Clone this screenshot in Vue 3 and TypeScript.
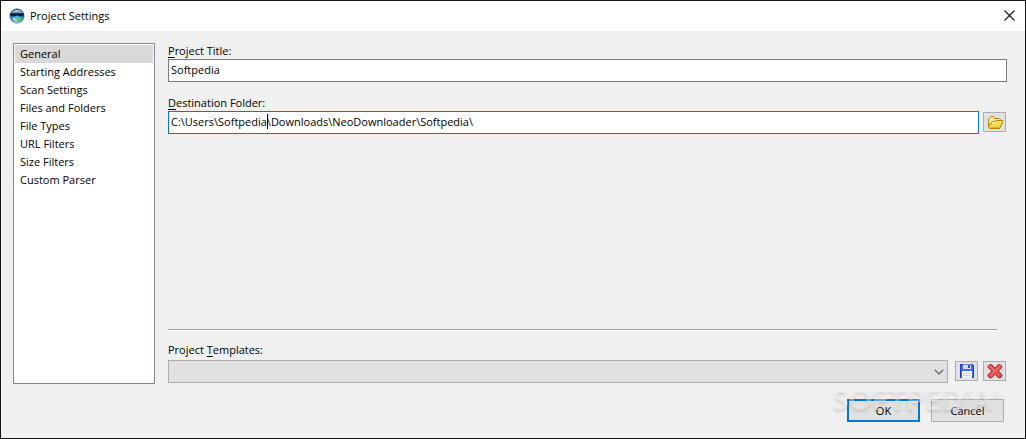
<script setup lang="ts">
import { nextTick, onMounted, ref } from 'vue'

const sections: string[] = [
  'General',
  'Starting Addresses',
  'Scan Settings',
  'Files and Folders',
  'File Types',
  'URL Filters',
  'Size Filters',
  'Custom Parser',
]

const active = ref('General')
const title = ref('Softpedia')
const folder = ref('C:\\Users\\Softpedia\\Downloads\\NeoDownloader\\Softpedia\\')
const template = ref('')
const folderInput = ref<HTMLInputElement | null>(null)
const caretIndex = 'C:\\Users\\Softpedia'.length
const caretLeft = ref(0)

onMounted(async () => {
  await nextTick()
  const input = folderInput.value
  const context = document.createElement('canvas').getContext('2d')
  if (!input || !context) return
  const style = getComputedStyle(input)
  context.font = `${style.fontSize} ${style.fontFamily}`
  const inset = parseFloat(style.paddingLeft) + parseFloat(style.borderLeftWidth)
  caretLeft.value = Math.round(inset + context.measureText(folder.value.slice(0, caretIndex)).width)
})
</script>

<template>
  <main class="window">
    <header class="titlebar">
      <svg class="app-icon" viewBox="0 0 16 16" aria-hidden="true">
        <defs>
          <radialGradient id="globe" cx="50%" cy="80%" r="75%">
            <stop offset="0" stop-color="#a5f0e0" />
            <stop offset="0.4" stop-color="#3fa0d8" />
            <stop offset="1" stop-color="#123a78" />
          </radialGradient>
          <linearGradient id="shine" x1="0" y1="0" x2="0" y2="1">
            <stop offset="0" stop-color="#d8e8f4" />
            <stop offset="1" stop-color="#3a6f9c" />
          </linearGradient>
        </defs>
        <circle cx="8" cy="8" r="7.2" fill="url(#globe)" stroke="#6d8090" stroke-width="0.6" />
        <path d="M2 5.6C3.4 .9 12.6 .9 14 5.6Z" fill="url(#shine)" />
        <path d="M.8 5.6Q8 5 15.2 5.6L14.6 7.6Q12.5 9 9.8 8L8 7.4 6.3 8Q3.5 9 1.4 7.6Z" fill="#0b1d38" />
        <path d="M8.4 9l3 .5 1.2 1.3-1.5 2.2-2.8.8-1-2Z" fill="#63c06a" />
        <path d="M3.4 9.8l3 .4-.6 2-1.5-.4Z" fill="#a8ecf4" />
      </svg>
      <h1>Project Settings</h1>
      <button class="close" type="button" aria-label="Close">
        <svg viewBox="0 0 11 11" aria-hidden="true">
          <path d="M.5.5l10 10M10.5.5l-10 10" fill="none" stroke="#111" stroke-width="1.1" />
        </svg>
      </button>
    </header>

    <div class="body">
      <nav class="sections" aria-label="Settings sections">
        <button
          v-for="name in sections"
          :key="name"
          type="button"
          :class="{ selected: name === active }"
          @click="active = name"
        >{{ name }}</button>
      </nav>

      <section class="form">
        <div class="field">
          <label for="title"><u>P</u>roject Title:</label>
          <input id="title" v-model="title" type="text" spellcheck="false" />
        </div>

        <div class="field">
          <label for="folder"><u>D</u>estination Folder:</label>
          <div class="row">
            <div class="caret-box">
              <input id="folder" ref="folderInput" v-model="folder" class="focused" type="text" spellcheck="false" />
              <span class="caret" :style="{ left: caretLeft + 'px' }"></span>
            </div>
            <button class="tool" type="button" aria-label="Browse">
              <svg viewBox="0 0 16 16" aria-hidden="true">
                <path d="M1.5 12.5V4.5L2.5 3.5H3L4 2.5H6.5L7.5 3.5V4.5H12.5L13.5 5.5V7" fill="#fbe88a" stroke="#b8860b" />
                <path d="M1.5 12.5L4.5 8.5L5.5 7.5H8L9 6.5H15.5V8L13.5 13L12.5 14.5H3L1.5 13.5Z" fill="#f8da58" stroke="#b07c08" />
                <path d="M5 9L6 8.5H8.5L9.5 7.5H14.5" fill="none" stroke="#fff6b8" />
                <path d="M3.5 13.5H12L13 12" fill="none" stroke="#e1ad1c" />
              </svg>
            </button>
          </div>
        </div>

        <hr />

        <div class="field">
          <label class="template-label" for="template">Project <u>T</u>emplates:</label>
          <div class="row templates">
            <div class="select-box">
              <select id="template" v-model="template">
                <option value=""></option>
              </select>
              <svg class="chevron" viewBox="0 0 10 6" aria-hidden="true">
                <path d="M.8.8L5 5 9.2.8" fill="none" stroke="#555" stroke-width="1.2" />
              </svg>
            </div>
            <button class="tool" type="button" aria-label="Save template">
              <svg viewBox="0 0 16 16" aria-hidden="true">
                <path d="M1.5 1.5H13.5L14.5 2.5V14.5H1.5Z" fill="#3d6bff" stroke="#1a35cc" />
                <path d="M4 1H12V6H4Z" fill="#cddcf2" />
                <path d="M4 1H12V2H4Z" fill="#7792ca" />
                <path d="M9 2H11V5H9Z" fill="#2446c8" />
                <path d="M3 8H13V15H3Z" fill="#f6f9ff" />
                <path d="M4 10H12V11H4ZM4 12H12V13H4Z" fill="#c3d0e6" />
              </svg>
            </button>
            <button class="tool" type="button" aria-label="Delete template">
              <svg viewBox="0 0 16 16" aria-hidden="true">
                <path d="M1 3.5L3 1.5H4.5L8 5.2 11.5 1.5H12.5L15 3.5V4.5L11.2 8 15 12V13L13 15H11.8L8 11.2 4.2 15H3L1 13V11.8L4.8 8 1 4.5Z" fill="#e9504f" stroke="#b81f24" />
                <path d="M3 3.5L7.6 7.8M12.7 3.5L8.4 7.8 4 12" fill="none" stroke="#f89590" />
              </svg>
            </button>
          </div>
        </div>
      </section>
    </div>

    <footer class="actions">
      <button class="push primary" type="button">OK</button>
      <button class="push" type="button">Cancel</button>
      <div class="watermark" aria-hidden="true">SOFTPEDIA<sup>®</sup></div>
    </footer>
  </main>
</template>

<style>
body {
  margin: 0;
}
</style>

<style scoped>
* {
  box-sizing: border-box;
}

.window {
  display: flex;
  flex-direction: column;
  min-height: 100vh;
  border: 1px solid #151515;
  background: #f0f0f0;
  color: #000;
  font: 11px/18px "Open Sans", "Noto Sans", sans-serif;
}

button,
input,
select {
  margin: 0;
  color: inherit;
  font: inherit;
  border-radius: 0;
  outline: none;
}

.titlebar {
  display: flex;
  align-items: center;
  height: 30px;
  padding: 0 10px 0 8px;
  background: #fff;
}

.app-icon {
  width: 16px;
  height: 16px;
}

h1 {
  flex: 1;
  margin: 0 0 0 5px;
  font-size: 11px;
  font-weight: 400;
}

.close {
  display: flex;
  padding: 0 0 2px;
  border: 0;
  background: none;
}

.close svg {
  width: 11px;
  height: 11px;
}

.body {
  display: flex;
  flex: 1;
  gap: 13px;
  padding: 12px 18px 0 12px;
}

.sections {
  display: flex;
  flex: 0 0 142px;
  flex-direction: column;
  padding: 1px;
  border: 1px solid #828790;
  background: #fff;
}

.sections button {
  height: 18px;
  padding: 0 5px;
  border: 0;
  background: none;
  text-align: left;
}

.sections .selected {
  background: #d9d9d9;
}

.form {
  display: flex;
  flex: 1;
  flex-direction: column;
  min-width: 0;
  padding-bottom: 1px;
}

.field {
  display: flex;
  flex-direction: column;
}

.field + .field {
  margin-top: 13px;
}

label {
  height: 16px;
  line-height: 16px;
}

.template-label {
  height: 18px;
}

u {
  text-underline-offset: 2px;
}

input {
  width: 100%;
  height: 23px;
  padding: 0 2px 2px;
  border: 1px solid #7a7a7a;
  background: #fff;
}

input.focused {
  border-color: #0078d7;
}

.row {
  display: flex;
  align-items: flex-start;
  gap: 4px;
  padding-right: 1px;
}

.caret-box,
.select-box {
  position: relative;
  display: flex;
  flex: 1;
}

.caret {
  position: absolute;
  top: 3px;
  width: 1px;
  height: 15px;
  background: #000;
}

.tool {
  display: flex;
  align-items: center;
  justify-content: center;
  width: 23px;
  height: 20px;
  margin-top: 1px;
  padding: 0;
  border: 1px solid #adadad;
  background: #e1e1e1;
}

.tool svg {
  width: 16px;
  height: 16px;
}

hr {
  width: auto;
  height: 2px;
  margin: auto 10px 11px 0;
  border: 0;
  border-top: 1px solid #a0a0a0;
  background: #fff;
}

.templates {
  gap: 5px;
}

.select-box {
  margin-right: 2px;
}

.caret-box {
  margin-right: 0;
}

select {
  width: 100%;
  height: 23px;
  border: 1px solid #adadad;
  background: #e1e1e1;
  appearance: none;
}

.chevron {
  position: absolute;
  top: 9px;
  right: 4px;
  width: 10px;
  height: 6px;
  pointer-events: none;
}

.actions {
  position: relative;
  display: flex;
  justify-content: flex-end;
  gap: 11px;
  padding: 15px 21px 16px;
}

.push {
  width: 73px;
  height: 23px;
  padding: 0;
  border: 1px solid #adadad;
  background: #e1e1e1;
}

.primary {
  border: 2px solid #0078d7;
}

.watermark {
  position: absolute;
  top: -1px;
  right: 24px;
  color: rgba(255, 255, 255, 0.4);
  font: 900 29px/32px Lato, sans-serif;
  text-shadow: 0 2px 3px rgba(0, 0, 0, 0.12);
  pointer-events: none;
}

.watermark sup {
  font-size: 11px;
  line-height: 0;
  vertical-align: 12px;
}
</style>
